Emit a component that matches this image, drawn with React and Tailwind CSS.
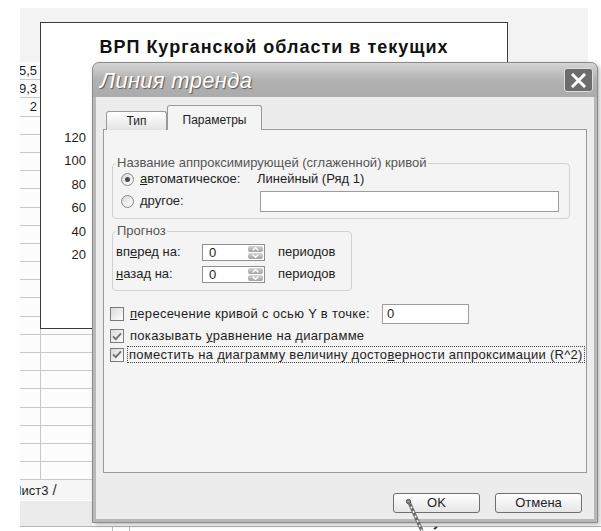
import React from "react";

const sheetRows = Array.from({ length: 23 }, (_, i) => ["55,5", "49,3", "2"][i] ?? "");
const axisLabels = ["120", "100", "80", "60", "40", "20"];

/* ---------- small dialog controls ---------- */
const Radio = ({ on }) => (
    <span className="flex h-[13px] w-[13px] shrink-0 items-center justify-center rounded-full border border-[#8a8a8a] bg-linear-to-br from-[#d9d9d9] to-white">
        {on && <span className="h-[5px] w-[5px] rounded-full bg-[#4a4a4a]" />}
    </span>
);

const Check = ({ on }) => (
    <span className="flex h-[14px] w-[14px] shrink-0 items-center justify-center border border-[#7b7b7b] bg-linear-to-br from-[#d9d9d9] to-white">
        {on && (
            <svg width="10" height="9" viewBox="0 0 10 9">
                <path d="M1 4.3 3.8 7.2 9 1.4" stroke="#707070" strokeWidth="1.8" fill="none" />
            </svg>
        )}
    </span>
);

const Arrow = ({ up }) => (
    <div className="flex flex-1 items-center justify-center rounded-[2px] bg-linear-to-b from-[#d6d6d6] to-[#a0a0a0]">
        <svg width="7" height="4" viewBox="0 0 7 4">
            <path d={up ? "M0.6 3.5 3.5 0.6 6.4 3.5" : "M0.6 0.5 3.5 3.4 6.4 0.5"} stroke="#fff" strokeWidth="1.3" fill="none" />
        </svg>
    </div>
);

const Spin = ({ value }) => (
    <div className="flex h-[17px] w-[63px] border border-[#8f8f8f] bg-white">
        <span className="flex-1 pl-[6px] leading-[15px]">{value}</span>
        <div className="flex w-[17px] flex-col gap-px p-px">
            <Arrow up />
            <Arrow />
        </div>
    </div>
);

const Button = ({ children }) => (
    <button className="flex h-[20px] w-[87px] items-center justify-center rounded-[3px] border border-[#6f6f6f] bg-linear-to-b from-white to-[#e6e6e6] text-[13px] text-[#222]">
        {children}
    </button>
);

export default function App() {
    return (
        <div className="relative flex h-[531px] w-[601px] flex-col overflow-hidden bg-white pl-[20px] pt-[8px] font-['Liberation_Sans',Arial,sans-serif] text-[13px] text-[#1e1e1e]">
            {/* SHEET BEHIND THE CHART */}
            <div className="h-[54px] w-[568px] bg-[#f3f3f3]" />
            <div className="flex w-[72px] flex-col bg-[#fcfcfc]">
                {sheetRows.map((v, i) => (
                    <div key={i} className="flex h-[18.2px] border-b border-[#c9c9c9]">
                        <div className="flex w-[21px] justify-end overflow-hidden border-r border-[#c9c9c9] pr-[3px] leading-[17px] whitespace-nowrap">
                            {v}
                        </div>
                        <div className="flex-1" />
                    </div>
                ))}
            </div>
            <div className="flex h-[20px] w-[72px] items-center gap-[4px] overflow-hidden bg-[#f6f6f6] whitespace-nowrap">
                <span className="-ml-[7px]">Лист3</span>
                <span className="text-[15px] text-[#333]">/</span>
            </div>
            <div className="h-[26px] w-[72px] border-t border-white bg-[#ebebeb]" />
            <div className="flex flex-1 border-t border-[#b5b5b5] bg-white">
                <div className="ml-[92px] w-[18px] border-x border-[#bdbdbd]" />
            </div>

            {/* CHART OBJECT */}
            <div className="absolute left-[40px] top-[22px] flex h-[307px] w-[468px] flex-col border border-[#3a3a3a] bg-white">
                <div className="pt-[14px] text-center text-[18px] leading-[21px] font-bold tracking-[1px] text-[#111]">
                    ВРП Курганской области в текущих
                </div>
                <div className="mt-[72px] flex w-[45px] flex-col items-end">
                    {axisLabels.map((l) => (
                        <div key={l} className="h-[23.4px] leading-[16px]">
                            {l}
                        </div>
                    ))}
                </div>
            </div>

            {/* TREND LINE DIALOG */}
            <div className="absolute left-[92px] top-[62px] flex h-[461px] w-[506px] flex-col rounded-t-[7px] border border-[#8a8a8a] bg-[#b8b8b8] shadow-[2px_2px_4px_rgba(0,0,0,0.25)]">
                <div className="flex h-[34px] items-center justify-between rounded-t-[6px] bg-linear-to-b from-[#d4d4d4] via-[#b2b2b2] to-[#ababab] pl-[7px] pr-[4px]">
                    <span className="text-[22px] leading-[25px] italic tracking-[0.3px] text-white [text-shadow:1px_1px_1px_#555]">
                        Линия тренда
                    </span>
                    <div className="flex h-[24px] w-[29px] items-center justify-center rounded-[3px] border border-[#dedede] bg-[#6c6c6c]">
                        <svg width="15" height="15" viewBox="0 0 15 15">
                            <path d="M2 2 13 13M13 2 2 13" stroke="#fff" strokeWidth="3" strokeLinecap="square" />
                        </svg>
                    </div>
                </div>

                <div className="mx-[3px] mb-[3px] flex flex-1 flex-col bg-[#ececec] px-[7px] pt-[8px] pb-[6px]">
                    {/* TABS */}
                    <div className="relative z-10 -mb-px flex h-[25px] items-end pl-[3px]">
                        <div className="flex h-[19px] w-[61px] items-center justify-center rounded-t-[3px] border border-b-0 border-[#9a9a9a] bg-linear-to-b from-white to-[#e4e4e4] text-[12px]">
                            Тип
                        </div>
                        <div className="flex h-[25px] w-[95px] items-start justify-center rounded-t-[3px] border border-b-0 border-[#9a9a9a] bg-[#f4f4f4] pt-[5px] text-[12px]">
                            Параметры
                        </div>
                    </div>

                    {/* TAB PANEL */}
                    <div className="flex h-[344px] w-[484px] flex-col border border-[#9a9a9a] bg-[#f4f4f4] pl-[8px] pt-[26px]">
                        <fieldset className="w-[458px] rounded-[4px] border border-[#d2d2d2] pb-[6px] pl-[8px]">
                            <legend className="ml-[-5px] px-[1px] leading-[14px] text-[#555]">
                                Название аппроксимирующей (сглаженной) кривой
                            </legend>
                            <div className="flex h-[18px] items-center">
                                <div className="flex w-[136px] items-center gap-[6px]">
                                    <Radio on />
                                    <span>
                                        <u>а</u>втоматическое:
                                    </span>
                                </div>
                                <span>Линейный (Ряд 1)</span>
                            </div>
                            <div className="mt-[2px] flex h-[22px] items-center">
                                <div className="flex w-[139px] items-center gap-[6px]">
                                    <Radio />
                                    <span>
                                        <u>д</u>ругое:
                                    </span>
                                </div>
                                <div className="h-[21px] w-[299px] border border-[#9c9c9c] bg-white" />
                            </div>
                        </fieldset>

                        <fieldset className="mt-[5px] w-[240px] rounded-[4px] border border-[#d2d2d2] pb-[7px] pl-[3px]">
                            <legend className="px-[1px] leading-[14px] text-[#555]">Прогноз</legend>
                            <div className="mt-[5px] flex h-[18px] items-center">
                                <span className="w-[86px]">
                                    вп<u>е</u>ред на:
                                </span>
                                <Spin value="0" />
                                <span className="ml-[13px]">периодов</span>
                            </div>
                            <div className="mt-[4px] flex h-[18px] items-center">
                                <span className="w-[86px]">
                                    <u>н</u>азад на:
                                </span>
                                <Spin value="0" />
                                <span className="ml-[13px]">периодов</span>
                            </div>
                        </fieldset>

                        {/* CHECK OPTIONS */}
                        <div className="-ml-[2px] mt-[13px] flex h-[20px] items-center gap-[3px]">
                            <Check />
                            <span className="pl-[3px] tracking-[0.3px]">
                                <u>п</u>ересечение кривой с осью Y в точке:
                            </span>
                            <div className="ml-[9px] h-[20px] w-[87px] border border-[#9c9c9c] bg-white pl-[4px] leading-[18px]">
                                0
                            </div>
                        </div>
                        <div className="-ml-[2px] mt-[4px] flex h-[16px] items-center gap-[3px]">
                            <Check on />
                            <span className="pl-[3px] tracking-[0.3px]">
                                показывать <u>у</u>равнение на диаграмме
                            </span>
                        </div>
                        <div className="-ml-[2px] mt-[2px] flex h-[17px] items-center gap-[3px]">
                            <Check on />
                            <span className="border border-dotted border-[#444] px-[1px] leading-[15px] tracking-[0.28px]">
                                поместить на диаграмму величину досто<u>в</u>ерности аппроксимации (R^2)
                            </span>
                        </div>
                    </div>

                    {/* FOOTER */}
                    <div className="mt-[20px] flex justify-end gap-[15px] pr-[5px]">
                        <Button>OK</Button>
                        <Button>Отмена</Button>
                    </div>
                </div>
            </div>

            {/* MOUSE POINTER OVER OK */}
            <svg className="pointer-events-none absolute left-[400px] top-[495px]" width="45" height="36" viewBox="0 0 45 36">
                <path d="M9 7 22 36" stroke="#6a6a6a" strokeWidth="3.4" />
                <path d="M9 7 22 36" stroke="#fff" strokeWidth="1.6" strokeDasharray="2 3" />
                <circle cx="8.5" cy="6.5" r="2.2" fill="#8a8a8a" stroke="#444" strokeWidth="0.8" />
                <path d="M34 34 37 32" stroke="#333" strokeWidth="2" />
            </svg>
        </div>
    );
}
